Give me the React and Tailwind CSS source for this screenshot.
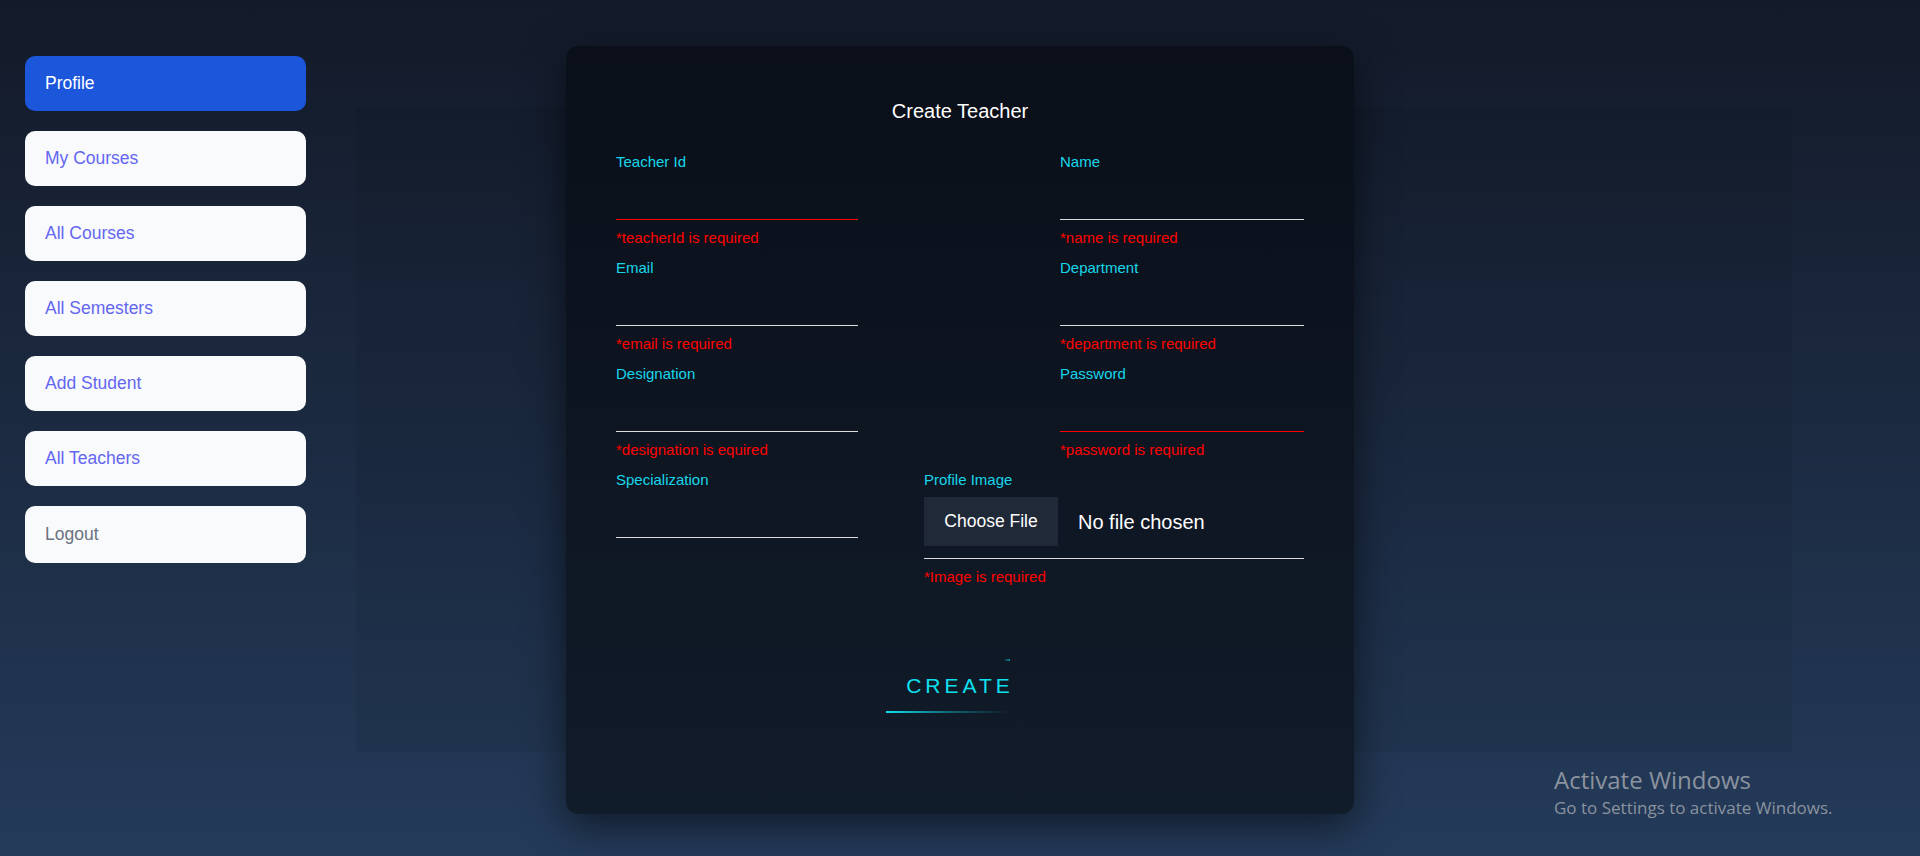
import React from 'react';

const menu = [
  { label: 'Profile', active: true },
  { label: 'My Courses' },
  { label: 'All Courses' },
  { label: 'All Semesters' },
  { label: 'Add Student' },
  { label: 'All Teachers' },
];

const Field = ({ label, error, invalid, width = 'w-[243px]', type = 'text' }) => (
  <div className={`${width} flex flex-col`}>
    <label className="text-[15px] leading-5 text-[#17d6ea]">{label}</label>
    <input
      type={type}
      className={`h-[48px] bg-transparent outline-none text-white border-b ${invalid ? 'border-[#ff0000]' : 'border-[#dcdcdc]'}`}
    />
    {error && <p className="mt-2 text-[15px] leading-5 text-[#ff0000]">{error}</p>}
  </div>
);

const App = () => {
  return (
    <div
      className="relative h-[856px] w-full overflow-hidden bg-gradient-to-b from-[#131a29] to-[#243b5a]"
      style={{ fontFamily: '"Liberation Sans", Arial, sans-serif' }}
    >
      {/* faint panel behind the form */}
      <div className="absolute left-[356px] top-[108px] h-[644px] w-[1436px] bg-black/[0.05]" />

      <div className="relative grid grid-cols-[1fr_788px_1fr]">
        {/* Sidebar */}
        <aside className="flex flex-col gap-5 pl-[25px] pt-[56px]">
          {menu.map((m) => (
            <button
              key={m.label}
              className={`flex h-[55px] w-[281px] items-center rounded-[10px] px-5 text-left text-[17.5px] ${
                m.active ? 'bg-[#1c56db] text-white' : 'bg-[#f8fafc] text-[#6466f1]'
              }`}
            >
              {m.label}
            </button>
          ))}
          <button className="flex h-[57px] w-[281px] items-center rounded-[10px] bg-[#f8fafc] px-5 text-left text-[17.5px] text-[#6b7280]">
            Logout
          </button>
        </aside>

        {/* Form card */}
        <div className="mt-[46px] h-[768px] rounded-xl bg-gradient-to-b from-[#0a0f19] to-[#111c2a] px-[50px] pt-[51px] shadow-[0_12px_40px_rgba(0,0,0,0.55)]">
          <h2 className="text-center text-xl leading-7 text-white">Create Teacher</h2>

          <div className="mt-[27px] flex flex-col gap-[10px]">
            <div className="flex justify-between">
              <Field label="Teacher Id" error="*teacherId is required" invalid width="w-[242px]" />
              <Field label="Name" error="*name is required" width="w-[244px]" />
            </div>
            <div className="flex justify-between">
              <Field label="Email" error="*email is required" width="w-[242px]" />
              <Field label="Department" error="*department is required" width="w-[244px]" />
            </div>
            <div className="flex justify-between">
              <Field label="Designation" error="*designation is equired" width="w-[242px]" />
              <Field label="Password" error="*password is required" invalid type="password" width="w-[244px]" />
            </div>
            <div className="flex justify-between">
              <Field label="Specialization" width="w-[242px]" />
              <div className="flex w-[380px] flex-col">
                <label className="text-[15px] leading-5 text-[#17d6ea]">Profile Image</label>
                <div className="flex items-center gap-5 border-b border-[#dcdcdc] pb-[12px] pt-[7px]">
                  <span className="flex h-[49px] w-[134px] items-center justify-center bg-[#1f2937] text-[17.5px] text-white">
                    Choose File
                  </span>
                  <span className="text-[20px] text-white">No file chosen</span>
                </div>
                <p className="mt-2 text-[15px] leading-5 text-[#ff0000]">*Image is required</p>
              </div>
            </div>
          </div>

          <div className="mt-[72px] flex justify-center">
            <button className="relative px-5 py-3 text-[21px] leading-[30px] tracking-[4px] text-[#0ee0ef]">
              CREATE
              <span className="absolute left-0 top-0 h-[2px] w-[124px]">
                <span className="absolute right-0 top-0 h-[2px] w-[6px] bg-gradient-to-r from-transparent to-[#0ee0ef]/60" />
              </span>
              <span className="absolute bottom-0 left-0 h-[2px] w-[122px] bg-gradient-to-r from-[#0ee0ef] via-[#0ee0ef]/40 to-transparent" />
            </button>
          </div>
        </div>

        <div />
      </div>

      {/* Windows watermark */}
      <div
        className="absolute left-[1554px] top-[764px] text-[#8a939f]"
        style={{ fontFamily: '"Open Sans", "Noto Sans", sans-serif' }}
      >
        <div className="text-[24px] leading-8">Activate Windows</div>
        <div className="text-[17px] leading-6">Go to Settings to activate Windows.</div>
      </div>
    </div>
  );
};

export default App;
